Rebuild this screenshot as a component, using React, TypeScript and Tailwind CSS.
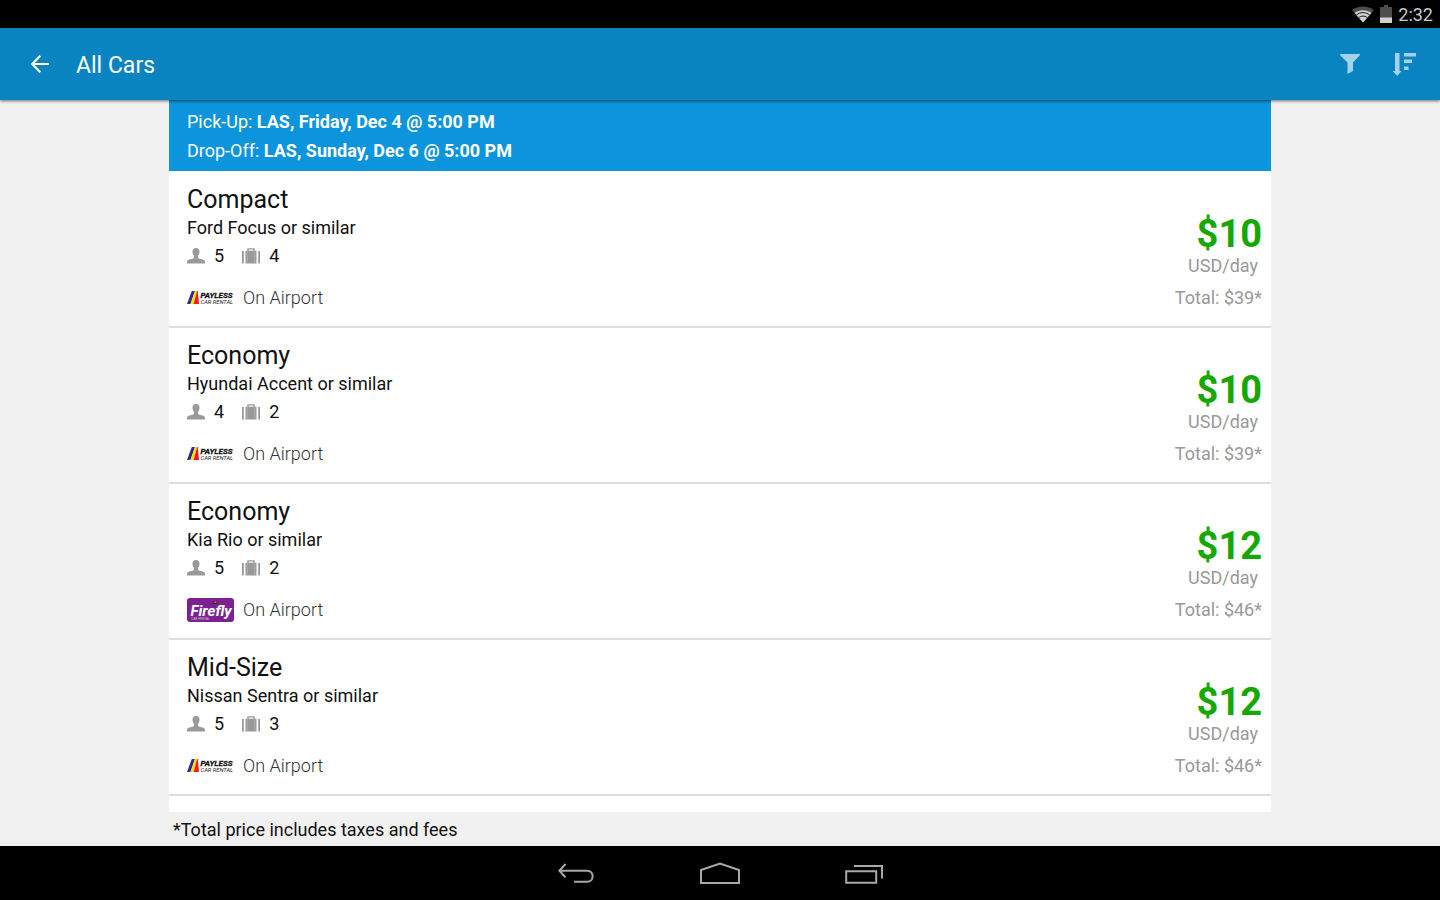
import React from 'react'

interface Car {
  id: string
  category: string
  model: string
  passengers: number
  bags: number
  vendor: 'payless' | 'firefly'
  price: number
  total: number
}

const cars: Car[] = [
  { id: '1', category: 'Compact', model: 'Ford Focus or similar', passengers: 5, bags: 4, vendor: 'payless', price: 10, total: 39 },
  { id: '2', category: 'Economy', model: 'Hyundai Accent or similar', passengers: 4, bags: 2, vendor: 'payless', price: 10, total: 39 },
  { id: '3', category: 'Economy', model: 'Kia Rio or similar', passengers: 5, bags: 2, vendor: 'firefly', price: 12, total: 46 },
  { id: '4', category: 'Mid-Size', model: 'Nissan Sentra or similar', passengers: 5, bags: 3, vendor: 'payless', price: 12, total: 46 }
]

function PersonIcon() {
  return (
    <svg className="h-4 w-[18px]" viewBox="0 0 18 16" fill="#999999" aria-label="Passengers" role="img">
      <path d="M9 0C6.600 0 5.300 1.500 5.500 4c.1 1.700.7 3 1.500 4v1.700c-.3.700-1.200 1-2.700 1.300C1.800 11.500 0 12.200 0 14v1.500h18V14c0-1.800-1.800-2.500-4.300-3-1.500-.3-2.400-.6-2.700-1.300V8c.8-1 1.400-2.300 1.500-4C12.700 1.500 11.400 0 9 0z" />
    </svg>
  )
}

function BagIcon() {
  return (
    <svg className="h-4 w-[18px]" viewBox="0 0 18 16" fill="#999999" aria-label="Bags" role="img">
      <path d="M0 3h1.800v12.500H0zM16.200 3H18v12.500h-1.800z" />
      <path d="M3.500 2.700h11v12.800h-11z" />
      <path d="M6 3V.9h6V3" fill="none" stroke="#999999" strokeWidth="1.400" />
      <path d="M5.300 2.700v12.800M12.700 2.700v12.800" stroke="#c0c0c0" strokeWidth="0.500" />
    </svg>
  )
}

function PaylessLogo() {
  return (
    <svg className="h-6 w-[47px]" viewBox="0 0 47 24" role="img" aria-label="Payless Car Rental">
      <path d="M4.800 5h3.200L3.500 18H0z" fill="#2b2f92" />
      <path d="M8 5h2L6.700 18H3.500z" fill="#ffe000" />
      <path d="M10 5h.8L12 18H6.700z" fill="#ee1c25" />
      <text x="13.500" y="12" fontFamily="Roboto, sans-serif" fontSize="8" fontWeight="700" fontStyle="italic" fill="#111" stroke="#111" strokeWidth="0.300">PAYLESS</text>
      <text x="13.500" y="18" fontFamily="Roboto, sans-serif" fontSize="5.800" fontStyle="italic" fill="#222">CAR RENTAL</text>
    </svg>
  )
}

function FireflyLogo() {
  return (
    <svg className="h-6 w-[47px]" viewBox="0 0 47 24" role="img" aria-label="Firefly Car Rental">
      <rect width="47" height="24" rx="3" fill="#7b2290" />
      <text x="3.500" y="17.500" fontFamily="Roboto, sans-serif" fontSize="15" fontWeight="700" fontStyle="italic" fill="#fff">Firefly</text>
      <text x="4" y="21.500" fontFamily="Liberation Sans, sans-serif" fontSize="3" fill="#d9b8e2">CAR RENTAL</text>
      <path d="M25 5.500l2-2.500 2 1 1.500 1.200-2.500.8z" fill="#201020" />
      <path d="M26 4.500l2.300-1.300 1.400 1.600z" fill="#f6a51c" />
    </svg>
  )
}

function StatusBar() {
  return (
    <div className="flex h-7 items-center justify-end bg-black pr-[7px] text-[#c8c8c8]">
      <svg className="mr-1.5 h-[18px] w-[22px]" viewBox="0 0 22 18" aria-hidden="true">
        <path d="M11 17.500L0 5C6.500.2 15.500.2 22 5z" fill="#4d4d4d" />
        <path d="M11 17.500L2.500 8C7.500 4.200 14.500 4.200 19.500 8z" fill="#d0d0d0" />
        <path d="M4.300 10c4.100-3.200 9.300-3.200 13.400 0M6.700 12.600c2.700-2 5.900-2 8.600 0" fill="none" stroke="#000" strokeWidth="0.900" />
      </svg>
      <svg className="mr-1.5 h-[18px] w-3" viewBox="0 0 12 18" aria-hidden="true">
        <path d="M4 0h4v2h4v16H0V2h4z" fill="#4d4d4d" />
        <path d="M0 12.500h12V18H0z" fill="#d0d0d0" />
      </svg>
      <span className="pt-px text-lg leading-7">2:32</span>
    </div>
  )
}

function AppBar() {
  return (
    <header className="relative z-10 flex h-[72px] items-center bg-[#0a84c1] px-6 shadow-[0_1px_3px_rgba(0,0,0,0.55)]">
      <button type="button" aria-label="Back" className="flex h-8 w-8 items-center justify-center">
        <svg className="h-[18px] w-[18px]" viewBox="0 0 18 18" fill="none" stroke="#fff" strokeWidth="2.200">
          <path d="M18 9H1.500M9.300.8L1.300 9l8 8.200" />
        </svg>
      </button>
      <h1 className="ml-5 flex-1 pt-1 text-[23px] leading-8 text-white">All Cars</h1>
      <button type="button" aria-label="Filter" className="flex h-8 w-8 items-center justify-center">
        <svg className="h-5 w-5" viewBox="0 0 20 20" fill="#a4d0ea">
          <path d="M0 0h20v1l-7 7.500V17l-5.500 3V8.500L0 1z" />
        </svg>
      </button>
      <button type="button" aria-label="Sort" className="-mr-1 ml-[22px] flex h-8 w-8 items-center justify-center">
        <svg className="h-6 w-6" viewBox="0 0 24 24" fill="#a4d0ea">
          <path d="M3 1h4.500v18h2L5.200 24 .8 19H3z" />
          <path d="M12 1h12v3.500H12zM12 7.500h8V11h-8zM12 14.500h4.500v3.500H12z" />
        </svg>
      </button>
    </header>
  )
}

function CarRow({ car }: { car: Car }) {
  return (
    <li className="flex h-[156px] items-start justify-between border-b-2 border-[#dddddd] pt-3.5 pr-[9px] pl-[18px]">
      <div>
        <h2 className="text-[25px] leading-7">{car.category}</h2>
        <p className="text-lg leading-7">{car.model}</p>
        <div className="flex h-7 items-center text-lg">
          <PersonIcon />
          <span className="ml-[9px]">{car.passengers}</span>
          <span className="ml-[18px] flex">
            <BagIcon />
          </span>
          <span className="ml-[9px]">{car.bags}</span>
        </div>
        <div className="mt-3.5 flex h-7 items-center gap-[9px]">
          {car.vendor === 'payless' ? <PaylessLogo /> : <FireflyLogo />}
          <span className="text-lg font-light text-[#333333]">On Airport</span>
        </div>
      </div>
      <div className="pt-7 text-right text-[#999999]">
        <p className="text-[38px] leading-10 font-bold text-[#14a800]">${car.price}</p>
        <p className="pr-1 text-lg leading-6">USD/day</p>
        <p className="mt-2 text-lg leading-6">Total: ${car.total}*</p>
      </div>
    </li>
  )
}

function NavBar() {
  return (
    <nav className="flex h-[54px] items-center justify-center gap-[104px] bg-black pt-0.5">
      <button type="button" aria-label="Back" className="flex h-10 w-10 items-center justify-center">
        <svg className="h-6 w-9" viewBox="0 0 36 24" fill="none" stroke="#a8a8a8" strokeWidth="2">
          <path d="M7.500 2L1.300 8.700l6.200 6.600M1.500 8.700H29c7.500 0 7.500 11 0 11H16" />
        </svg>
      </button>
      <button type="button" aria-label="Home" className="flex h-10 w-10 items-center justify-center">
        <svg className="h-6 w-10" viewBox="0 0 40 24" fill="none" stroke="#a8a8a8" strokeWidth="2">
          <path d="M1 8v13h38V8L20 1.500z" />
        </svg>
      </button>
      <button type="button" aria-label="Recent apps" className="flex h-10 w-10 items-center justify-center">
        <svg className="h-6 w-[38px]" viewBox="0 0 38 24" fill="none" stroke="#a8a8a8" strokeWidth="2">
          <path d="M1.200 9.200h30v11.600h-30zM9 4h28v12.500" />
        </svg>
      </button>
    </nav>
  )
}

export default function App() {
  return (
    <div className="flex min-h-screen flex-col bg-[#f1f1f1] font-['Roboto',sans-serif] text-[#111111]">
      <StatusBar />
      <AppBar />

      <main className="mx-auto flex w-full max-w-[1102px] flex-1 flex-col">
        {/* Trip summary */}
        <div className="bg-[#0c94dc] px-[18px] pt-[7px] pb-1.5 text-lg text-white">
          <p className="leading-[29px]">
            Pick-Up: <strong>LAS, Friday, Dec 4 @ 5:00 PM</strong>
          </p>
          <p className="leading-[29px]">
            Drop-Off: <strong>LAS, Sunday, Dec 6 @ 5:00 PM</strong>
          </p>
        </div>

        {/* Results */}
        <ul className="flex-1 bg-white pt-px">
          {cars.map(car => (
            <CarRow key={car.id} car={car} />
          ))}
        </ul>

        <p className="px-1 pt-0.5 text-lg leading-8">*Total price includes taxes and fees</p>
      </main>

      <NavBar />
    </div>
  )
}
